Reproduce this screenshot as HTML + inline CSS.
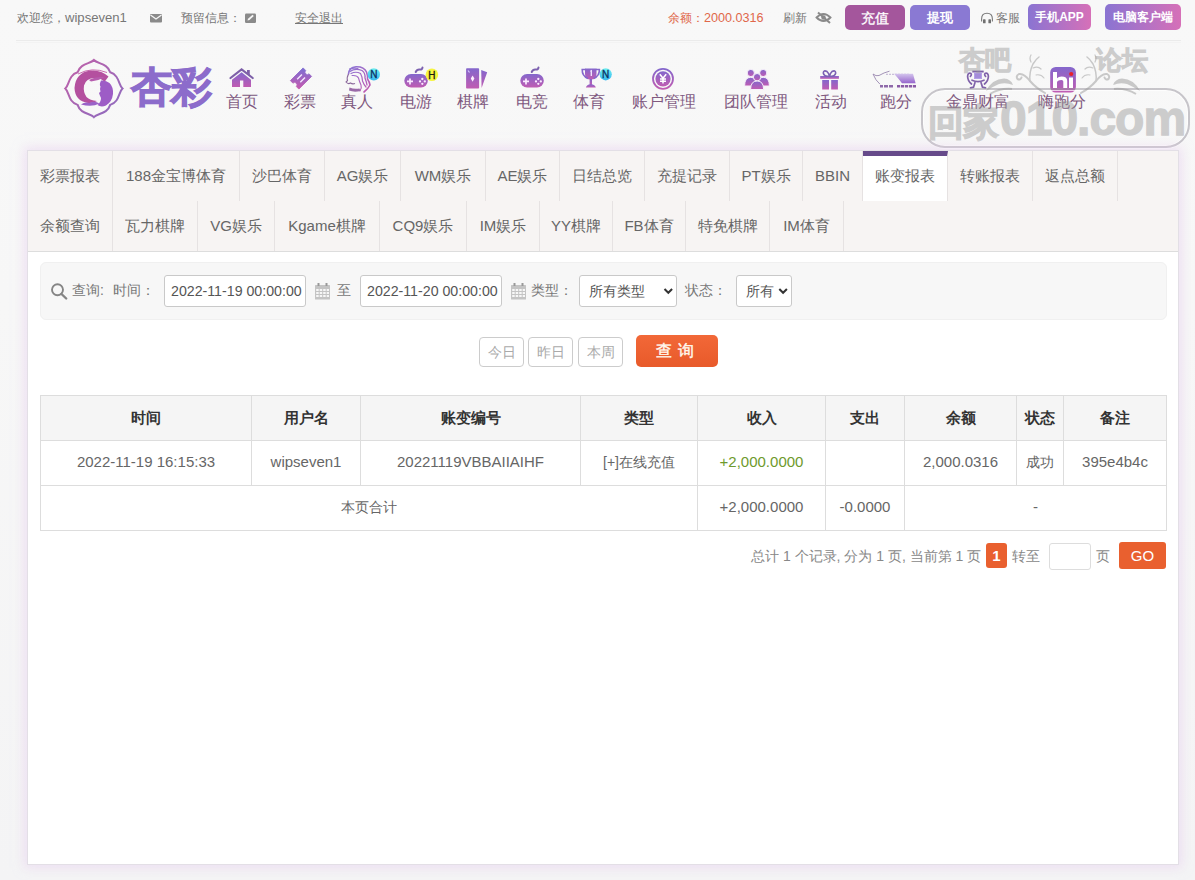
<!DOCTYPE html>
<html><head><meta charset="utf-8">
<style>
*{margin:0;padding:0;box-sizing:border-box}
html,body{width:1195px;height:880px;overflow:hidden}
body{font-family:"Liberation Sans",sans-serif;background:linear-gradient(#f8f8f8 0,#f7f7f7 300px,#f4f4f5 880px);position:relative;color:#666}
.abs{position:absolute;white-space:nowrap}
#topline{position:absolute;left:16px;top:40px;width:1165px;height:1px;background:#ebebeb;box-shadow:0 2px 0 #f3f3f3}
.tb{font-size:12px;line-height:14px;color:#777}
.btn{position:absolute;border-radius:5px;color:#fff;text-align:center;font-size:14px}
.nav{position:absolute;top:92px;font-size:16px;line-height:20px;color:#80597f;text-align:center;white-space:nowrap}
#panel{position:absolute;left:27px;top:150px;width:1152px;height:715px;background:#fff;border:1px solid #e3dfe6;box-shadow:0 0 10px 3px rgba(232,208,238,.55)}
.tabs{position:absolute;left:0;top:0;width:1150px;height:101px;background:#f7f4f3;border-bottom:1px solid #ddd}
.tab{position:absolute;height:50px;line-height:50px;font-size:15px;color:#666;text-align:center;border-right:1px solid #e6e2e2;white-space:nowrap}
.tab.act{background:#fff;border-top:5px solid #664a8a;line-height:40px;height:50px}
.search{position:absolute;left:40px;top:262px;width:1127px;height:58px;background:#f7f7f7;border:1px solid #f0f0f0;border-radius:6px}
.lbl{position:absolute;font-size:14px;line-height:16px;color:#777;white-space:nowrap}
.inp{position:absolute;top:275px;height:32px;background:#fff;border:1px solid #c9c9c9;border-radius:3px;font-size:14.2px;line-height:30px;color:#555;padding-left:6px;white-space:nowrap}
.sel{position:absolute;top:275px;height:32px;background:#fff;border:1px solid #c9c9c9;border-radius:3px;font-size:14px;line-height:30px;color:#555;white-space:nowrap}
.qb{position:absolute;top:337px;width:45px;height:30px;border:1px solid #ccc;border-radius:4px;background:#fff;color:#aaa;font-size:14px;line-height:28px;text-align:center}
.go{position:absolute;left:636px;top:335px;width:82px;height:32px;border-radius:5px;background:linear-gradient(#f26838,#e85a2a);color:#fff8ee;font-size:16px;font-weight:normal;-webkit-text-stroke:0.4px #fff8ee;line-height:31px;text-align:center;letter-spacing:6px;text-indent:1px}
table{position:absolute;left:40px;top:395px;border-collapse:collapse;table-layout:fixed}
td,th{border:1px solid #ddd;height:45px;text-align:center;font-size:15px;color:#666;font-weight:normal;padding:0;white-space:nowrap}
th{background:#f5f5f5;color:#333;font-weight:bold;font-size:15px}
.pg{position:absolute;font-size:14px;line-height:16px;color:#888;white-space:nowrap}
s{text-decoration:none;position:relative;top:-2px}
</style></head><body>
<div id="topline"></div>
<svg id="ic" width="1195" height="160" viewBox="0 0 1195 160" style="position:absolute;left:0;top:0">
<defs>
<linearGradient id="pg" x1="0" y1="0" x2="0" y2="1"><stop offset="0" stop-color="#8467cc"/><stop offset="1" stop-color="#c05cb2"/></linearGradient>
<linearGradient id="pg2" x1="0" y1="0" x2="1" y2="1"><stop offset="0" stop-color="#8a6cd2"/><stop offset="1" stop-color="#c35cb0"/></linearGradient>
<linearGradient id="tg" gradientUnits="userSpaceOnUse" x1="0" y1="68" x2="0" y2="89"><stop offset="0" stop-color="#7f6ed2"/><stop offset="1" stop-color="#c45ab0"/></linearGradient>
<linearGradient id="tg2" gradientUnits="userSpaceOnUse" x1="-7" y1="-7" x2="7" y2="7"><stop offset="0" stop-color="#7f6ed2"/><stop offset="1" stop-color="#c45ab0"/></linearGradient>
<linearGradient id="cy" x1="0" y1="0" x2="0" y2="1"><stop offset="0" stop-color="#6ff0f0"/><stop offset="1" stop-color="#38b8f0"/></linearGradient>
<linearGradient id="lg" x1="0" y1="0" x2="1" y2="1"><stop offset="0" stop-color="#b860a8"/><stop offset="1" stop-color="#9468b8"/></linearGradient>
</defs>
<!-- top bar icons -->
<g fill="#8a8a8a">
<rect x="150" y="14" width="12" height="8.5" rx="1"/>
<path d="M150.5 15 L156 19 L161.5 15" fill="none" stroke="#f5f5f5" stroke-width="1.3"/>
<rect x="245" y="13.5" width="11" height="9.5" rx="1.2"/>
<path d="M247.5 20.5 L248 18.8 L252.5 14.8 L253.8 16 L249.5 20 Z" fill="#f5f5f5"/>
</g>
<g fill="none" stroke="#8a8a8a" stroke-width="1.8">
<path d="M816.5 17.5 Q823.5 10.5 830.5 17.5 Q823.5 24.5 816.5 17.5Z"/>
<path d="M818 12.5 L830 23" stroke-width="2"/>
</g>
<circle cx="823.5" cy="17.5" r="2.2" fill="#8a8a8a"/>
<path d="M981.6 21.5 L981.6 19 Q981.6 13.2 987 13.2 Q992.4 13.2 992.4 19 L992.4 21.5" fill="none" stroke="#7a7a7a" stroke-width="1.1"/>
<rect x="983" y="19.3" width="2.6" height="4" rx="0.6" fill="#707070"/><rect x="988.4" y="19.3" width="2.6" height="4" rx="0.6" fill="#707070"/>

<!-- logo emblem -->
<linearGradient id="lg2" gradientUnits="userSpaceOnUse" x1="66" y1="62" x2="122" y2="116"><stop offset="0" stop-color="#c060a8"/><stop offset="1" stop-color="#8c6cc0"/></linearGradient>
<path d="M93.90 60.00 C97.40 64.00 107.40 63.10 110.20 72.30 C119.40 75.10 118.50 85.10 122.50 88.60 C118.50 92.10 119.40 102.10 110.20 104.90 C107.40 114.10 97.40 113.20 93.90 117.20 C90.40 113.20 80.40 114.10 77.60 104.90 C68.40 102.10 69.30 92.10 65.30 88.60 C69.30 85.10 68.40 75.10 77.60 72.30 C80.40 63.10 90.40 64.00 93.90 60.00Z" fill="none" stroke="url(#lg2)" stroke-width="2"/>
<path d="M108.5 76.5 Q101 69.5 90.5 70.5 Q75.5 72.5 74.5 88 Q75 101 88 103 Q94 103.5 97 101 Q90 100.5 86.5 97 Q83 92 84 85.5 Q86 78.5 93.5 78 Q101 77.5 104.5 82 Z" fill="#b4509f"/>
<path d="M78 74 Q92 66.5 107 72.5" fill="none" stroke="#c25aa6" stroke-width="0.9"/>
<path d="M89 80 Q95 76.5 104.5 77.2 Q99 80.5 91 81.5 Z" fill="#b65cae"/>
<path d="M101 80.5 Q106 80 109.5 83 Q113.5 87 113 94 Q112 102 106 105.5 Q101 107.5 97.5 105 Q101 102 101 98 Q99.5 95 99 93 L100.5 91.5 Q99.5 89 100.5 86.5 Q99 84.5 101 80.5Z" fill="#9d5cc6"/>
<path d="M81 104.5 Q85 101.5 89.5 103 Q94.5 100.5 99.5 103.5 Q92 107.5 81 104.5Z" fill="#9a62c8"/>
<!-- house -->
<g fill="url(#pg)">
<path d="M232 79.8 L241.6 72.3 L251 79.8 L251 87 L243.3 87 L243.3 80.6 L240 80.6 L240 87 L232 87Z"/>
</g>
<path d="M230.5 78 L241.6 69.5 L252.7 78" fill="none" stroke="#7d5fa8" stroke-width="2.2" stroke-linecap="round"/>
<rect x="247" y="70" width="2.8" height="5" fill="#8060a8"/>

<!-- ticket -->
<g transform="translate(301 78.5) rotate(45)">
<path d="M-6 -9 L-2.4 -9 A2.4 2.4 0 0 0 2.4 -9 L6 -9 L6 9 L2.4 9 A2.4 2.4 0 0 0 -2.4 9 L-6 9Z" fill="url(#tg2)" stroke="url(#tg2)" stroke-width="0.8" stroke-linejoin="round"/>
<path d="M-2.2 -3.5 L-2.2 3.2 M2.2 -3.5 L2.2 3.2" stroke="#f4e8ff" stroke-width="1.4"/>
</g>

<!-- woman -->
<linearGradient id="wg" gradientUnits="userSpaceOnUse" x1="348" y1="66" x2="370" y2="90"><stop offset="0" stop-color="#8a78d8"/><stop offset="1" stop-color="#c058b0"/></linearGradient>
<g fill="none" stroke="url(#wg)" stroke-linecap="round">
<path d="M348.5 74 Q349 67.5 356 66.8 Q364 66.5 366.5 72 Q368 76 367.5 79 Q369.5 82 370 85 Q368 89 364 92" stroke-width="1.6"/>
<path d="M350 71.5 Q355 68 362 70.5 Q365.5 73 365 78 Q366.5 82 367 85" stroke-width="1.3"/>
<path d="M351 73.5 Q356 71 360.5 73.5 Q362.5 77 362.5 81 Q364 85 366 87" stroke-width="1.2"/>
<path d="M352 75.5 Q357 75 358.5 78 Q359.5 82 361 85 Q362 88 360 91" stroke-width="1.1"/>
<path d="M349.5 69 Q353 67.5 358 68.5" stroke-width="1.1"/>
</g>
<path d="M348.5 74 Q346.5 78 347.5 80.5 L346 82 Q348 84.5 350.5 83 Q352.5 84.5 355 83.5" fill="none" stroke="#8c6a9c" stroke-width="1.1"/>
<path d="M349.5 87.5 Q354 89.5 359.5 88.5 L360.5 91 Q354 92.5 349 90.5Z" fill="#9a6aa8"/>
<circle cx="373.8" cy="74.4" r="6.2" fill="url(#cy)"/>
<text x="373.8" y="78.1" text-anchor="middle" font-family="Liberation Sans" font-size="10" fill="#0b2f63" stroke="#0b2f63" stroke-width="0.3">N</text>

<!-- gamepad 1 -->
<g id="gp">
<path d="M415.7 72 Q417 69 420 69.5 Q422 70 422.5 67.5" fill="none" stroke="#7d62b0" stroke-width="2" stroke-linecap="round"/>
<rect x="404.3" y="74.1" width="23.5" height="13.5" rx="6.75" fill="url(#pg)"/>
<path d="M407 81.4 H413 M410 78.4 V84.4" stroke="#fbeaff" stroke-width="1.7"/>
<circle cx="422.3" cy="79" r="1.15" fill="#fbeaff"/><circle cx="420" cy="81.4" r="1.15" fill="#fbeaff"/><circle cx="424.8" cy="81.4" r="1.15" fill="#fbeaff"/><circle cx="422.3" cy="83.8" r="1.15" fill="#fbeaff"/>
</g>
<circle cx="431.9" cy="74.8" r="6.3" fill="#f6f540"/>
<text x="431.9" y="78.6" text-anchor="middle" font-family="Liberation Sans" font-size="10" fill="#1a1a10" stroke="#1a1a10" stroke-width="0.3">H</text>
<!-- gamepad 2 -->
<use href="#gp" x="116" y="0"/>

<!-- cards -->
<path d="M481.2 70 L487.2 72.3 L481.6 88 Z" fill="url(#pg)"/>
<rect x="466.1" y="68.3" width="13" height="20.3" rx="0.8" fill="url(#pg)"/>
<path d="M472.6 75.5 L474.4 78.6 L472.6 81.7 L470.8 78.6Z" fill="#fdf0ff"/>
<path d="M468 70.5 L469.5 72.5" stroke="#d8c8ff" stroke-width="1.2"/>

<!-- trophy -->
<g fill="url(#pg)">
<path d="M585 68.5 H596.5 V74 Q596.5 79.5 590.8 79.5 Q585 79.5 585 74Z"/>
<path d="M589.6 79 H592 V85 H589.6Z"/>
<path d="M585.9 87.6 Q586.5 84.5 590.8 84.3 Q595.2 84.5 595.8 87.6Z"/>
</g>
<path d="M585.5 69.5 H582.2 Q582 76 588 78.5 M596 69.5 H599.4 Q599.6 76 593.6 78.5" fill="none" stroke="#8467cc" stroke-width="1.6"/>
<path d="M590.3 71.3 L591.3 70.8 V76" stroke="#f4eaff" stroke-width="1.3" fill="none"/>
<circle cx="605.7" cy="74.3" r="6.1" fill="url(#cy)"/>
<text x="605.7" y="78" text-anchor="middle" font-family="Liberation Sans" font-size="10" fill="#0b2f63" stroke="#0b2f63" stroke-width="0.3">N</text>

<!-- yen coin -->
<circle cx="663" cy="78.8" r="10" fill="none" stroke="url(#pg)" stroke-width="1.8"/>
<circle cx="663" cy="78.8" r="7.6" fill="url(#pg)"/>
<path d="M659.8 74.2 L663 78.3 L666.2 74.2 M663 78.3 V83.6 M660 79 H666 M660 81.2 H666" fill="none" stroke="#fff" stroke-width="1.5"/>

<!-- group -->
<g fill="url(#pg)" stroke="#f6f0fa" stroke-width="1">
<circle cx="750.8" cy="73" r="3.6"/><circle cx="763.2" cy="73" r="3.6"/>
<path d="M744.6 86 Q744.6 77.3 750.8 77.3 Q757 77.3 757 86Z"/>
<path d="M757 86 Q757 77.3 763.2 77.3 Q769.4 77.3 769.4 86Z"/>
<circle cx="757.1" cy="77.2" r="3.7"/>
<path d="M750.6 89.5 Q750.6 81 757.1 81 Q763.6 81 763.6 89.5Z"/>
</g>

<!-- gift -->
<g fill="url(#pg)">
<rect x="820.2" y="76" width="18.7" height="2.8"/>
<rect x="822.2" y="80" width="6.8" height="9.5"/>
<rect x="831.2" y="80" width="6.7" height="9.5"/>
</g>
<g fill="none" stroke="#7c62b4" stroke-width="1.6">
<path d="M829.5 76 Q824 77 823.3 73 Q823.5 69.8 827 71.5 Q829 73.5 829.5 76 Q830 73.5 832 71.5 Q835.5 69.8 835.7 73 Q835 77 829.5 76"/>
</g>

<!-- rhino -->
<linearGradient id="rg" gradientUnits="userSpaceOnUse" x1="0" y1="73" x2="0" y2="83.5"><stop offset="0" stop-color="#d8ccef"/><stop offset="1" stop-color="#9462cc"/></linearGradient>
<path d="M873 74 Q875.5 80.5 880 84.2" fill="none" stroke="#9a88b0" stroke-width="0.9"/>
<path d="M873 74 Q876 76.5 879 75.5 Q884 72.5 889.5 71.2" fill="none" stroke="#9a88b0" stroke-width="0.9"/>
<path d="M886 74.3 H910" stroke="#b0a0c8" stroke-width="0.8" stroke-dasharray="2 1"/>
<path d="M894 73.8 H913 L915.6 83.2 H902 Q898 78 894 73.8Z" fill="url(#rg)"/>
<path d="M880 86.3 H893" stroke="#8f6aaa" stroke-width="2.4" stroke-dasharray="3 1 4 1 4"/>
<path d="M897 86.3 H916" stroke="#8a5aa6" stroke-width="2.4" stroke-dasharray="3.2 0.8"/>
<!-- ding -->
<rect x="972.3" y="70.6" width="11.4" height="1.9" fill="#7c60a6"/>
<rect x="974" y="72.5" width="8" height="6.5" fill="#b4a0e6"/>
<path d="M976 73.5 V78 M978 73.5 V78 M980 73.5 V78" stroke="#8e70c8" stroke-width="0.8"/>
<g fill="none" stroke="#8062aa" stroke-width="1.7" stroke-linecap="round">
<path d="M972 80.2 Q978 83 984 80.2"/>
<path d="M971.5 84 Q967.5 80.5 967.6 76 Q968 72.5 970.6 73.2 Q972.2 74.6 970.4 76.4"/>
<path d="M984.5 84 Q988.5 80.5 988.4 76 Q988 72.5 985.4 73.2 Q983.8 74.6 985.6 76.4"/>
<path d="M975 82.5 L973.5 87.2 L970.5 87.8 M981 82.5 L982.5 87.2 L985.5 87.8"/>
</g>
<!-- hi -->
<rect x="1050.2" y="67" width="25.7" height="25.5" rx="5.5" fill="url(#pg)"/>
<path d="M1053 72 H1057 V78.2 Q1058.5 76.5 1061.5 76.5 Q1067.2 76.5 1067.2 80.8 V88 H1063.3 V81.5 Q1063.3 80 1061.6 80 Q1057 80 1057 82.5 V88 H1053Z" fill="#fff"/>
<rect x="1069" y="77.5" width="4" height="10.5" fill="#fff"/>
<circle cx="1071.2" cy="74" r="2.1" fill="#e8202a"/>
</svg>

<div class="abs tb" style="left:17px;top:11px">欢迎您，<span style="font-size:13.1px">wipseven1</span></div>
<div class="abs tb" style="left:181px;top:11px">预留信息：</div>
<div class="abs tb" style="left:295px;top:11px;text-decoration:underline">安全退出</div>
<div class="abs tb" style="left:668px;top:11px;color:#e0674a">余额：<span style="font-size:12.6px">2000.0316</span></div>
<div class="abs tb" style="left:783px;top:11px">刷新</div>
<div class="btn" style="left:845px;top:5px;width:60px;height:25px;line-height:26px;background:#a4569c;-webkit-text-stroke:0.3px #fff">充值</div>
<div class="btn" style="left:910px;top:5px;width:60px;height:25px;line-height:25px;background:#8a79d3;font-size:13px;font-weight:bold">提现</div>
<div class="abs tb" style="left:996px;top:11px">客服</div>
<div class="btn" style="left:1028px;top:4px;width:63px;height:26px;line-height:26px;font-size:12px;font-weight:bold;background:linear-gradient(90deg,#8a74d2,#d670b8)">手机APP</div>
<div class="btn" style="left:1105px;top:4px;width:76px;height:26px;line-height:26px;font-size:12px;font-weight:bold;background:linear-gradient(90deg,#8a74d2,#d670b8)">电脑客户端</div>

<div class="abs" style="left:131px;top:62px;font-size:41px;line-height:50px;font-weight:900;color:#8c6ccb;letter-spacing:-1px;-webkit-text-stroke:1.2px #8c6ccb">杏彩</div>
<div class="nav" style="left:226px">首页</div>
<div class="nav" style="left:284px">彩票</div>
<div class="nav" style="left:341px">真人</div>
<div class="nav" style="left:400px">电游</div>
<div class="nav" style="left:457px">棋牌</div>
<div class="nav" style="left:516px">电竞</div>
<div class="nav" style="left:573px">体育</div>
<div class="nav" style="left:632px">账户管理</div>
<div class="nav" style="left:724px">团队管理</div>
<div class="nav" style="left:815px">活动</div>
<div class="nav" style="left:880px">跑分</div>
<div class="nav" style="left:946px">金鼎财富</div>
<div class="nav" style="left:1038px">嗨跑分</div>


<div id="wm" style="position:absolute;left:0;top:0;width:1195px;height:160px;pointer-events:none">
<div style="position:absolute;left:921px;top:88px;width:269px;height:60px;border:2.5px solid rgba(150,146,156,.5);border-radius:24px;box-shadow:inset 0 0 0 1px rgba(255,255,255,.7),0 1px 0 rgba(255,255,255,.7)"></div>
<div class="abs" style="left:959px;top:43px;font-size:26px;line-height:34px;font-weight:900;color:#999;-webkit-text-stroke:1px #999;opacity:.45">杏吧</div>
<div class="abs" style="left:1096px;top:43px;font-size:26px;line-height:34px;font-weight:900;color:#999;-webkit-text-stroke:1px #999;opacity:.45">论坛</div>
<div class="abs" style="left:928px;top:94px;font-size:36px;line-height:50px;font-weight:900;color:#999;letter-spacing:-1px;-webkit-text-stroke:1.3px #999;opacity:.45">回家<span style="font-size:48px;letter-spacing:-1px;margin-left:2px">010.com</span></div>
<svg width="1195" height="160" style="position:absolute;left:0;top:0">
<g id="orn" opacity="0.5">
<path d="M986 91 Q992 79 1004 78.5 Q1011 79 1013 85 Q1006 82 999 84 Q992 87 986 91Z" fill="#9a9a9a"/>
<path d="M990 94 Q1000 88 1012 89" fill="none" stroke="#9a9a9a" stroke-width="2"/>
<g fill="none" stroke="#9a9a9a" stroke-linecap="round">
<path d="M1045 93 Q1036 88 1030 81 Q1024 73 1019 74 Q1015.5 76 1017.5 79 Q1020.5 80.5 1021.5 77.5" stroke-width="2"/>
<path d="M1030 81 Q1029 72 1033 64 Q1036 59 1039 57" stroke-width="1.5"/>
<path d="M1033 68 Q1038 66 1041 69" stroke-width="1.2"/>
<path d="M1031 62 Q1029 58 1031 55" stroke-width="1.2"/>
<path d="M1036 75 Q1041 74 1044 78" stroke-width="1.1"/>
</g>
</g>
<use href="#orn" transform="translate(2126 0) scale(-1 1)"/>
</svg>
</div>
<div id="panel">
<div class="tabs">
<div class="tab" style="left:0px;top:0px;width:85px">彩票报表</div>
<div class="tab" style="left:85px;top:0px;width:127px">188金宝博体育</div>
<div class="tab" style="left:212px;top:0px;width:85px">沙巴体育</div>
<div class="tab" style="left:297px;top:0px;width:76px">AG娱乐</div>
<div class="tab" style="left:373px;top:0px;width:85px">WM娱乐</div>
<div class="tab" style="left:458px;top:0px;width:74px">AE娱乐</div>
<div class="tab" style="left:532px;top:0px;width:85px">日结总览</div>
<div class="tab" style="left:617px;top:0px;width:85px">充提记录</div>
<div class="tab" style="left:702px;top:0px;width:73px">PT娱乐</div>
<div class="tab" style="left:775px;top:0px;width:60px">BBIN</div>
<div class="tab act" style="left:835px;top:0px;width:85px">账变报表</div>
<div class="tab" style="left:920px;top:0px;width:85px">转账报表</div>
<div class="tab" style="left:1005px;top:0px;width:85px">返点总额</div>
<div class="tab" style="left:0px;top:50px;width:85px">余额查询</div>
<div class="tab" style="left:85px;top:50px;width:85px">瓦力棋牌</div>
<div class="tab" style="left:170px;top:50px;width:77px">VG娱乐</div>
<div class="tab" style="left:247px;top:50px;width:105px">Kgame棋牌</div>
<div class="tab" style="left:352px;top:50px;width:87px">CQ9娱乐</div>
<div class="tab" style="left:439px;top:50px;width:73px">IM娱乐</div>
<div class="tab" style="left:512px;top:50px;width:73px">YY棋牌</div>
<div class="tab" style="left:585px;top:50px;width:73px">FB体育</div>
<div class="tab" style="left:658px;top:50px;width:84px">特免棋牌</div>
<div class="tab" style="left:742px;top:50px;width:74px">IM体育</div>
</div>
</div>

<div class="search"></div>


<div class="lbl" style="left:72px;top:282px">查询:</div>
<div class="lbl" style="left:113px;top:282px">时间：</div>
<div class="inp" style="left:164px;width:142px">2022-11-19 00:00:00</div>
<div class="lbl" style="left:337px;top:282px">至</div>
<div class="inp" style="left:360px;width:142px">2022-11-20 00:00:00</div>
<div class="lbl" style="left:531px;top:282px">类型：</div>
<div class="sel" style="left:579px;width:98px;padding-left:9px">所有类型</div>
<div class="lbl" style="left:685px;top:282px">状态：</div>
<div class="sel" style="left:736px;width:56px;padding-left:9px">所有</div>
<svg width="1195" height="60" viewBox="0 270 1195 60" style="position:absolute;left:0;top:270px">
<circle cx="57.5" cy="289.8" r="5.5" fill="none" stroke="#858585" stroke-width="1.9"/>
<path d="M61.5 294 L66.2 298.5" stroke="#858585" stroke-width="2.4" stroke-linecap="round"/>
<g id="cal" fill="#c4c4c4">
<rect x="315" y="285" width="15" height="14.4" rx="0.5"/>
<rect x="317.5" y="283" width="2" height="3" fill="#999"/><rect x="325.5" y="283" width="2" height="3" fill="#999"/>
<g fill="#f7f7f7"><rect x="316.2" y="289" width="2.5" height="2"/><rect x="319.7" y="289" width="2.5" height="2"/><rect x="323.2" y="289" width="2.5" height="2"/><rect x="326.7" y="289" width="2.3" height="2"/>
<rect x="316.2" y="292" width="2.5" height="2"/><rect x="319.7" y="292" width="2.5" height="2"/><rect x="323.2" y="292" width="2.5" height="2"/><rect x="326.7" y="292" width="2.3" height="2"/>
<rect x="316.2" y="295" width="2.5" height="2"/><rect x="319.7" y="295" width="2.5" height="2"/><rect x="323.2" y="295" width="2.5" height="2"/><rect x="326.7" y="295" width="2.3" height="2"/></g>
</g>
<use href="#cal" x="196"/>
<path d="M664.5 289 L668.3 292.8 L672.1 289" fill="none" stroke="#333" stroke-width="2"/>
<path d="M779.3 289 L783.1 292.8 L786.9 289" fill="none" stroke="#333" stroke-width="2"/>
</svg>
<div class="qb" style="left:479px">今日</div>
<div class="qb" style="left:528px">昨日</div>
<div class="qb" style="left:578px">本周</div>
<div class="go">查询</div>
<table>
<colgroup><col style="width:211px"><col style="width:109px"><col style="width:220px"><col style="width:117px"><col style="width:128px"><col style="width:79px"><col style="width:112px"><col style="width:47px"><col style="width:103px"></colgroup>
<tr><th>时间</th><th>用户名</th><th>账变编号</th><th>类型</th><th>收入</th><th>支出</th><th>余额</th><th>状态</th><th>备注</th></tr>
<tr><td><s>2022-11-19 16:15:33</s></td><td><s>wipseven1</s></td><td><s>20221119VBBAIIAIHF</s></td><td style="font-size:14px">[+]在线充值</td><td style="color:#6e9a2c"><s>+2,000.0000</s></td><td></td><td><s>2,000.0316</s></td><td style="font-size:14px">成功</td><td><s>395e4b4c</s></td></tr>
<tr><td colspan="4" style="font-size:14px">本页合计</td><td><s>+2,000.0000</s></td><td><s>-0.0000</s></td><td colspan="3"><s>-</s></td></tr>
</table>
<div class="pg" style="left:751px;top:548px">总计 1 个记录, 分为 1 页, 当前第 1 页</div>
<div style="position:absolute;left:986px;top:543px;width:21px;height:25px;background:#e9602f;border-radius:3px;color:#fff;font-weight:bold;font-size:15px;line-height:25px;text-align:center">1</div>
<div class="pg" style="left:1012px;top:548px">转至</div>
<div style="position:absolute;left:1049px;top:543px;width:42px;height:27px;background:#fff;border:1px solid #ddd;border-radius:3px"></div>
<div class="pg" style="left:1096px;top:548px">页</div>
<div style="position:absolute;left:1119px;top:542px;width:47px;height:27px;background:#e9602f;border-radius:3px;color:#fff;font-size:15px;line-height:27px;text-align:center">GO</div>
</body></html>
